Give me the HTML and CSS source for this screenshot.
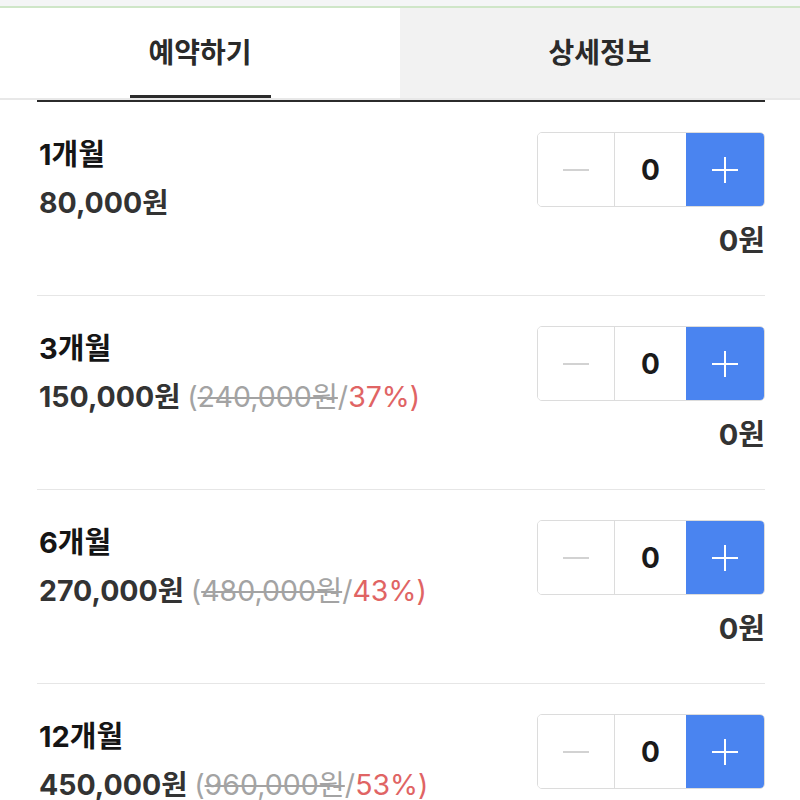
FILE: index.html
```html
<!DOCTYPE html>
<html lang="ko">
<head>
<meta charset="utf-8">
<link rel="stylesheet" href="styles.css">
</head>
<body>
<div class="topbar"></div>
<div class="tabs">
  <div class="tab active"><span class="tab-label">예약하기</span></div>
  <div class="tab"><span class="tab-label">상세정보</span></div>
</div>
<div class="list">
  <div class="item">
    <div class="info">
      <div class="title">1개월</div>
      <div class="price">80,000원</div>
    </div>
    <div class="ctrl">
      <div class="stepper">
        <div class="btn minus"><span class="bar"></span></div>
        <div class="count">0</div>
        <div class="btn plus"><span class="bar"></span><span class="bar v"></span></div>
      </div>
      <div class="sum">0원</div>
    </div>
  </div>
  <div class="item">
    <div class="info">
      <div class="title">3개월</div>
      <div class="price">150,000원 <span class="orig">(<s>240,000원</s>/</span><span class="rate">37%)</span></div>
    </div>
    <div class="ctrl">
      <div class="stepper">
        <div class="btn minus"><span class="bar"></span></div>
        <div class="count">0</div>
        <div class="btn plus"><span class="bar"></span><span class="bar v"></span></div>
      </div>
      <div class="sum">0원</div>
    </div>
  </div>
  <div class="item">
    <div class="info">
      <div class="title">6개월</div>
      <div class="price">270,000원 <span class="orig">(<s>480,000원</s>/</span><span class="rate">43%)</span></div>
    </div>
    <div class="ctrl">
      <div class="stepper">
        <div class="btn minus"><span class="bar"></span></div>
        <div class="count">0</div>
        <div class="btn plus"><span class="bar"></span><span class="bar v"></span></div>
      </div>
      <div class="sum">0원</div>
    </div>
  </div>
  <div class="item">
    <div class="info">
      <div class="title">12개월</div>
      <div class="price">450,000원 <span class="orig">(<s>960,000원</s>/</span><span class="rate">53%)</span></div>
    </div>
    <div class="ctrl">
      <div class="stepper">
        <div class="btn minus"><span class="bar"></span></div>
        <div class="count">0</div>
        <div class="btn plus"><span class="bar"></span><span class="bar v"></span></div>
      </div>
      <div class="sum">0원</div>
    </div>
  </div>
</div>
</body>
</html>
```

FILE: styles.css
```css
* { box-sizing: border-box; }
html, body { margin: 0; padding: 0; background: #fff; }
body {
  width: 800px;
  height: 800px;
  overflow: hidden;
  font-family: "Inter", "Noto Sans CJK KR", sans-serif;
  color: #222;
}
.topbar {
  height: 8px;
  background: #f4f5f6;
  border-bottom: 2px solid #cfe6c8;
}
.tabs {
  display: flex;
  height: 92px;
  border-bottom: 2px solid #e8e8e8;
  position: relative;
}
.tab {
  flex: 1;
  display: flex;
  justify-content: center;
  align-items: center;
  background: #f2f2f2;
  position: relative;
}
.tab.active { background: #fff; }
.tab-label {
  font-family: "Noto Sans CJK KR", sans-serif;
  font-size: 28px;
  font-weight: 700;
  color: #2a2a2a;
  padding-bottom: 4px;
}
.tab.active::after {
  content: "";
  position: absolute;
  left: 130px;
  width: 141px;
  bottom: 0;
  height: 3px;
  background: #2b2b2b;
}
.list {
  margin: 0 35px 0 37px;
  border-top: 2px solid #2b2b2b;
}
.item {
  display: flex;
  justify-content: space-between;
  padding: 30px 0 35px;
  border-bottom: 1px solid #e6e6e6;
  height: 194px;
}
.info { padding-top: 4px; padding-left: 2px; }
.title {
  font-size: 29px;
  font-weight: 700;
  line-height: 38px;
  color: #151515;
}
.price {
  margin-top: 14px;
  font-size: 28.5px;
  font-weight: 700;
  line-height: 30px;
  color: #333;
}
.orig { color: #a3a3a3; font-weight: 400; }
.orig s { text-decoration-thickness: 2px; }
.rate { color: #e06464; font-weight: 400; }
.ctrl {
  display: flex;
  flex-direction: column;
  align-items: flex-end;
}
.stepper {
  display: flex;
  width: 228px;
  height: 77px;
  border: 1px solid #dcdcdc;
  border-radius: 5px;
  overflow: hidden;
}
.btn {
  width: 77px;
  display: flex;
  align-items: center;
  justify-content: center;
  position: relative;
}
.minus { background: #fff; border-right: 1px solid #dcdcdc; }
.plus { background: #4a84f0; width: 78px; }
.bar {
  display: block;
  width: 26px;
  height: 2px;
  background: #d2d2d2;
}
.plus .bar { background: #fff; position: absolute; }
.plus .bar.v { width: 2px; height: 26px; }
.count {
  flex: 1;
  display: flex;
  align-items: center;
  justify-content: center;
  font-size: 28px;
  font-weight: 700;
  color: #1a1a1a;
}
.sum {
  margin-top: 15px;
  font-size: 29px;
  font-weight: 700;
  line-height: 38px;
  color: #333;
}
```
